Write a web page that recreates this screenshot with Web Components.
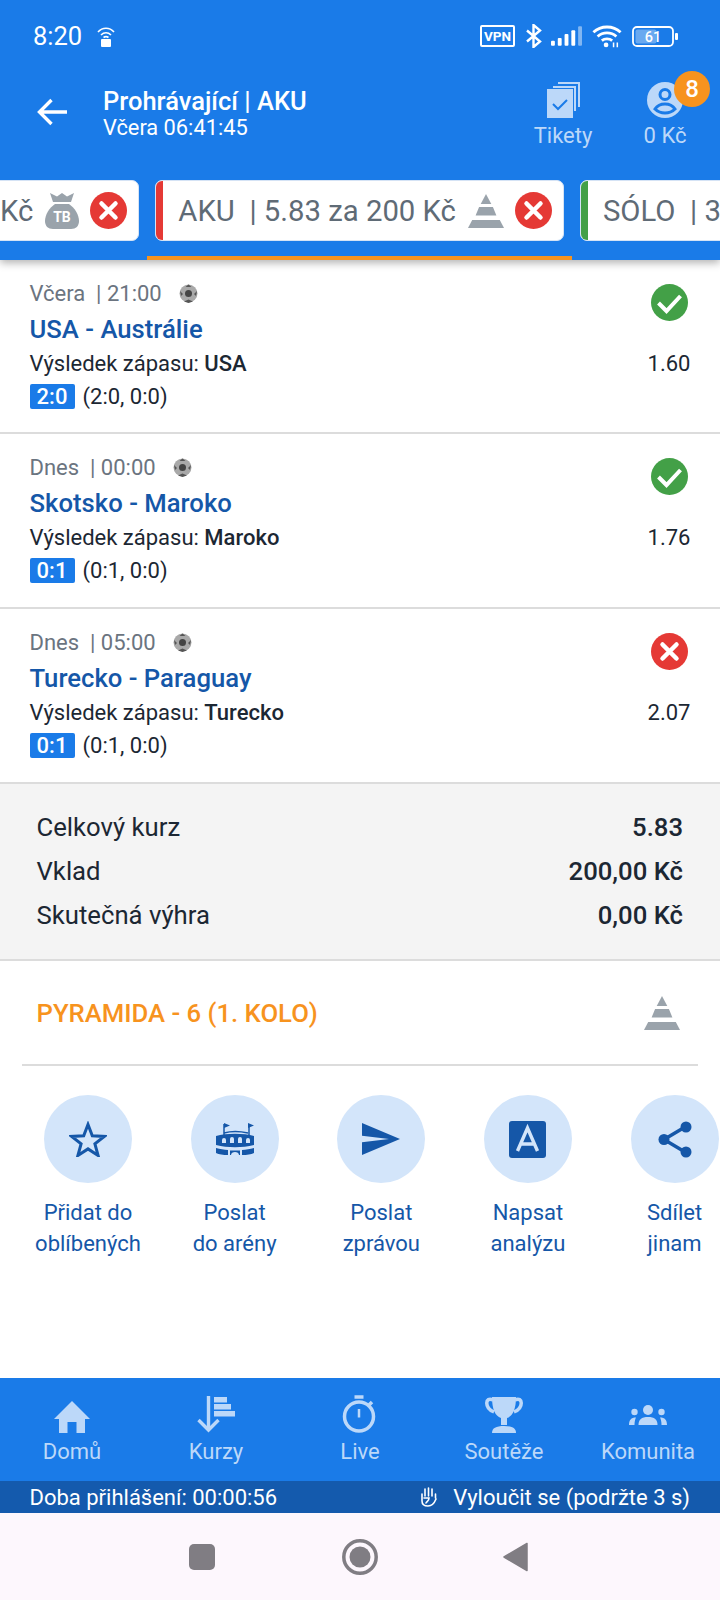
<!DOCTYPE html>
<html lang="cs">
<head>
<meta charset="utf-8">
<title>Tiket</title>
<style>
  html, body { margin: 0; padding: 0; }
  body {
    width: 720px;
    height: 1600px;
    overflow: hidden;
    display: flex;
    flex-direction: column;
    background: #fff;
    font-family: Roboto, "Noto Sans", sans-serif;
    color: #1c2733;
  }
</style>
</head>
<body>
<top-panel>
  <status-bar></status-bar>
  <top-header title="Prohrávající | AKU" subtitle="Včera 06:41:45"></top-header>
  <tab-strip>
    <bet-tab style="margin-left:-31px" icon="bag">Kč</bet-tab>
    <bet-tab active stripe="#e53935" icon="pyramid">AKU&nbsp; | 5.83 za 200 Kč</bet-tab>
    <bet-tab stripe="#43a047">SÓLO&nbsp; | 3</bet-tab>
  </tab-strip>
</top-panel>
<match-row day="Včera" time="21:00" teams="USA - Austrálie" pick="USA" score="2:0" detail="(2:0, 0:0)" odds="1.60" state="won"></match-row>
<match-row day="Dnes" time="00:00" teams="Skotsko - Maroko" pick="Maroko" score="0:1" detail="(0:1, 0:0)" odds="1.76" state="won"></match-row>
<match-row day="Dnes" time="05:00" teams="Turecko - Paraguay" pick="Turecko" score="0:1" detail="(0:1, 0:0)" odds="2.07" state="lost"></match-row>
<ticket-summary>
  <summary-line label="Celkový kurz" value="5.83"></summary-line>
  <summary-line label="Vklad" value="200,00 Kč"></summary-line>
  <summary-line label="Skutečná výhra" value="0,00 Kč"></summary-line>
</ticket-summary>
<ticket-type>PYRAMIDA - 6 (1. KOLO)</ticket-type>
<action-row>
  <action-button icon="star">Přidat do<br>oblíbených</action-button>
  <action-button icon="arena">Poslat<br>do arény</action-button>
  <action-button icon="send">Poslat<br>zprávou</action-button>
  <action-button icon="write">Napsat<br>analýzu</action-button>
  <action-button icon="share">Sdílet<br>jinam</action-button>
</action-row>
<bottom-nav>
  <nav-item icon="home">Domů</nav-item>
  <nav-item icon="odds">Kurzy</nav-item>
  <nav-item icon="live">Live</nav-item>
  <nav-item icon="cup">Soutěže</nav-item>
  <nav-item icon="people">Komunita</nav-item>
</bottom-nav>
<session-bar time="00:00:56"></session-bar>
<system-nav></system-nav>

<script>
const BLUE = "#1a7be8";
const NAVY = "#1557a8";
const PALE = "#bcd8f9";
const GREY = "#9aa3ab";

const PYRAMID = `<svg width="36" height="34" viewBox="0 0 36 34" fill="${GREY}">
  <path d="M18 0l5.300 10h-10.600z"/><path d="M11.100 13h13.800l3.500 8.600h-20.800z"/><path d="M4.200 26h27.600l4.200 8h-36z"/></svg>`;

const TAB_ICONS = {
    pyramid: PYRAMID,
    bag: `<svg width="34" height="36" viewBox="0 0 34 36" fill="${GREY}">
      <path d="M5 0l7 3.500 5-3.500 5 3.500 7-3.500-3 9h-18z"/>
      <path d="M10 11h14c6 4 10 11 10 17 0 5-3 8-8 8h-18c-5 0-8-3-8-8 0-6 4-13 10-17z"/>
      <text x="17" y="29" text-anchor="middle" font-family="Roboto" font-weight="700" font-size="14" fill="#fff">TB</text></svg>`
};

const ACTION_ICONS = {
    star: `<svg width="38" height="36" viewBox="0 0 38 36" fill="none" stroke="${NAVY}" stroke-width="3"><path d="M19 3.500l4.300 11.300 12 .6-9.400 7.500 3.200 11.600-10.100-6.600-10.100 6.600 3.200-11.600-9.400-7.500 12-.6z"/></svg>`,
    arena: `<svg width="38" height="34" viewBox="0 0 38 34" fill="${NAVY}">
      <path d="M8 2v14M33 2v14" stroke="${NAVY}" stroke-width="1.500"/>
      <path d="M8 1l6 2.500-6 2.500zM32 1l6 2.500-6 2.500z"/>
      <path d="M8 11c7-2 15-2 24 0" fill="none" stroke="${NAVY}" stroke-width="1.500"/>
      <path fill-rule="evenodd" d="M0 14c10-3 28-3 38 0v9c-12 3-26 3-38 0zM6 21h4v-3a2 2 0 0 0-4 0zM14 21h4v-4a2 2 0 0 0-4 0zM22 21h4v-4a2 2 0 0 0-4 0zM30 21h4v-3a2 2 0 0 0-4 0z"/>
      <path d="M0 26c4 1.200 8 1.800 12 2v5c-5 0-9-.6-12-2zM38 26c-4 1.200-8 1.800-12 2v5c5 0 9-.6 12-2zM14 28.500h10v4.500h-1c0-4-8-4-8 0h-1z"/></svg>`,
    send: `<svg width="38" height="32" viewBox="0 0 38 32" fill="${NAVY}"><path d="M0 0l38 16-38 16v-12.800l27-3.200-27-3.200z"/></svg>`,
    write: `<svg width="37" height="37" viewBox="0 0 37 37"><rect width="37" height="37" rx="3" fill="${NAVY}"/><path d="M8.500 30l10-23 10 23M12 23h13" fill="none" stroke="#d3e5fa" stroke-width="3.400"/></svg>`,
    share: `<svg width="34" height="37" viewBox="0 0 34 37" fill="${NAVY}"><path d="M27 6l-21 12.500 21 12.500" fill="none" stroke="${NAVY}" stroke-width="3.500"/><circle cx="28" cy="6" r="5.500"/><circle cx="6" cy="18.500" r="5.500"/><circle cx="28" cy="31" r="5.500"/></svg>`
};

const NAV_ICONS = {
    home: `<svg width="36" height="32" viewBox="0 0 36 32" fill="${PALE}"><path d="M18 0l18 18h-5v14h-8.500v-11h-9v11h-8.500v-14h-5z"/></svg>`,
    odds: `<svg width="38" height="37" viewBox="0 0 38 37" fill="${PALE}"><path d="M11.500 0v33" stroke="${PALE}" stroke-width="3.400"/><path d="M1.500 24l10 10 10-10" fill="none" stroke="${PALE}" stroke-width="3.400"/><rect x="17" y="1" width="13" height="5.500"/><rect x="17" y="8" width="17" height="5.500"/><rect x="17" y="15" width="21" height="5.500"/></svg>`,
    live: `<svg width="36" height="38" viewBox="0 0 36 38" fill="none" stroke="${PALE}" stroke-width="3.500"><circle cx="17" cy="21.500" r="14.500"/><path d="M12.500 2h9M30 7l-3 3"/><path d="M17 14v8.500" stroke-width="2.500"/></svg>`,
    cup: `<svg width="38" height="37" viewBox="0 0 38 37" fill="${PALE}"><path d="M8 4c-8-4-9 8 1 12M30 4c8-4 9 8-1 12" fill="none" stroke="${PALE}" stroke-width="3.500"/><path d="M7 1h24c0 12-3 19-9 21v7h-6v-7c-6-2-9-9-9-21z"/><path d="M7 37c0-5 4-7 12-7s12 2 12 7z"/></svg>`,
    people: `<svg width="38" height="20" viewBox="0 0 38 20" fill="${PALE}" style="margin-bottom:8px"><circle cx="19" cy="5" r="5"/><circle cx="5.500" cy="7" r="3.200"/><circle cx="32.500" cy="7" r="3.200"/><path d="M9.500 20c0-5.500 3-8 9.500-8s9.500 2.500 9.500 8z"/><path d="M0 20c0-5 2-7.500 7-7.500-1 2-1.500 4.500-1.500 7.500zM38 20c0-5-2-7.500-7-7.500 1 2 1.500 4.500 1.500 7.500z"/></svg>`
};

function closeIcon(size) {
    return `<svg width="${size}" height="${size}" viewBox="0 0 37 37"><circle cx="18.500" cy="18.500" r="18.500" fill="#e53935"/><path d="M11.500 11.500l14 14M25.500 11.500l-14 14" stroke="#fff" stroke-width="4.500" stroke-linecap="round"/></svg>`;
}

class BaseElement extends HTMLElement {
    constructor() {
        super();
        this.attachShadow({ mode: "open" });
    }
    connectedCallback() {
        this.shadowRoot.innerHTML = this.render();
    }
    attr(name) {
        const value = this.getAttribute(name);
        return value !== null ? value : "";
    }
}

class TopPanel extends BaseElement {
    render() {
        return `<style>
          :host { display: block; position: relative; z-index: 2; flex: none; height: 260px; background: ${BLUE}; box-shadow: 0 3px 8px rgba(0,0,0,.3); }
        </style><slot></slot>`;
    }
}

class StatusBar extends BaseElement {
    render() {
        return `<style>
          :host { display: flex; align-items: center; height: 72px; padding: 0 42px 0 33px; color: #fff; font-size: 25.500px; }
          .left { display: flex; align-items: center; gap: 15px; flex: 1; }
          .right { display: flex; align-items: center; }
          svg { display: block; }
        </style>
        <div class="left"><span>8:20</span>
          <svg width="18" height="21" viewBox="0 0 18 21" fill="none" stroke="#fff" stroke-width="1.600"><path d="M1 6c4.500-5 11.500-5 16 0M4 9c3-3 7-3 10 0M6.500 11.500c1.500-1 3.500-1 5 0"/><rect x="4" y="13" width="10" height="8" rx="1" fill="#fff" stroke="none"/></svg></div>
        <div class="right">
          <svg width="35" height="22" viewBox="0 0 35 22" style="margin-right:10px"><rect x="1" y="1" width="33" height="20" rx="1" fill="none" stroke="#fff" stroke-width="2"/><text x="17.500" y="16" text-anchor="middle" font-family="Roboto" font-weight="700" font-size="13.500" fill="#fff">VPN</text></svg>
          <svg width="17" height="24" viewBox="0 0 17 24" fill="none" stroke="#fff" stroke-width="2.400" style="margin-right:9px"><path d="M2 6.500l13 11-6.500 5.500v-22l6.500 5.500-13 11"/></svg>
          <svg width="31" height="21" viewBox="0 0 32 21" fill="#fff" style="margin-right:10px"><rect x="0" y="15" width="4" height="5" rx="1"/><rect x="7" y="12" width="4" height="8" rx="1"/><rect x="14" y="8" width="4" height="12" rx="1"/><rect x="21" y="4" width="4" height="16" rx="1"/><rect x="28" y="0" width="4" height="20" rx="1" opacity=".45"/></svg>
          <svg width="30" height="24" viewBox="0 0 32 24" fill="none" stroke="#fff" stroke-width="3" style="margin-right:10px"><path d="M1.500 8c8-7.500 21-7.500 29 0M6 12.500c5.500-5 14.500-5 20 0M10.500 17c3-2.500 8-2.500 11 0"/><circle cx="15" cy="21.500" r="2.500" fill="#fff" stroke="none"/><path d="M23 19v5M27 19v5" stroke-width="1.600"/></svg>
          <svg width="46" height="21" viewBox="0 0 46 21"><rect x="1" y="1" width="40" height="19" rx="4" fill="none" stroke="#fff" stroke-width="1.800"/><rect x="3.500" y="3.500" width="21" height="14" rx="2" fill="#fff" opacity=".35"/><rect x="43" y="7" width="3" height="7" rx="1" fill="#fff"/><text x="21" y="16" text-anchor="middle" font-family="Roboto" font-weight="500" font-size="14.500" fill="#fff">61</text></svg>
        </div>`;
    }
}

class TopHeader extends BaseElement {
    render() {
        return `<style>
          :host { display: flex; align-items: flex-start; height: 108px; color: #fff; }
          .back { flex: none; width: 30px; margin: 26px 36px 0 37px; display: block; }
          .titles { flex: 1; padding-top: 15px; }
          .title { font-size: 25.500px; font-weight: 500; line-height: 28px; }
          .sub { margin-top: -1px; font-size: 21.800px; line-height: 28px; }
          .tool { flex: none; width: 102px; padding-top: 10px; display: flex; flex-direction: column; align-items: center; color: ${PALE}; font-size: 22px; line-height: 28px; }
          .tool svg { display: block; }
          .me { margin-right: 4px; }
          .icon { position: relative; height: 36px; margin-bottom: 4px; }
          .badge { position: absolute; left: 27px; top: -11px; width: 36px; height: 36px; border-radius: 50%; background: #f7931e; color: #fff; font-size: 24px; font-weight: 500; line-height: 36px; text-align: center; }
        </style>
        <svg class="back" height="28" viewBox="0 0 30 28" fill="none" stroke="#fff" stroke-width="3.400"><path d="M30 14h-27M14.500 2l-12 12 12 12"/></svg>
        <div class="titles"><div class="title">${this.attr("title")}</div><div class="sub">${this.attr("subtitle")}</div></div>
        <div class="tool"><div class="icon"><svg width="33" height="36" viewBox="0 0 33 36" fill="none"><path d="M11 1h21v24M6 5h22v24" stroke="${PALE}" stroke-width="2"/><rect y="7" width="26" height="29" fill="${PALE}"/><path d="M6 22l5 5 9-9" stroke="${BLUE}" stroke-width="2"/></svg></div>Tikety</div>
        <div class="tool me"><div class="icon"><svg width="36" height="36" viewBox="0 0 36 36"><circle cx="18" cy="18" r="18" fill="${PALE}"/><circle cx="18" cy="12.500" r="5" fill="none" stroke="${BLUE}" stroke-width="3"/><path d="M8 27c2-3 6-5 10-5s8 2 10 5c-2.500 2.500-6 4-10 4s-7.500-1.500-10-4z" fill="${PALE}" stroke="${BLUE}" stroke-width="3"/></svg><span class="badge">8</span></div>0 Kč</div>`;
    }
}

class TabStrip extends BaseElement {
    render() {
        return `<style>
          :host { display: flex; height: 80px; overflow: hidden; }
        </style><slot></slot>`;
    }
}

class BetTab extends BaseElement {
    render() {
        const icon = TAB_ICONS[this.attr("icon")] || "";
        const close = this.attr("icon") ? closeIcon(37) : "";
        return `<style>
          :host { display: block; flex: none; padding: 0 8px; height: 80px; box-sizing: border-box; border-bottom: 4px solid ${this.hasAttribute("active") ? "#f7931e" : "transparent"}; }
          .tab { display: flex; align-items: center; gap: 11px; height: 61px; box-sizing: border-box; background: #fff; border-radius: 7px; border: 1px solid #d5e3f5; overflow: hidden; padding-right: 11px; color: #5f6b76; font-size: 29.300px; white-space: nowrap; }
          .stripe { flex: none; align-self: stretch; width: 7px; background: ${this.attr("stripe") || "#fff"}; }
          .text { margin-left: auto; padding: 0 1px 0 4px; }
          svg { display: block; flex: none; }
        </style>
        <div class="tab"><span class="stripe"></span><span class="text"><slot></slot></span>${icon}${close}</div>`;
    }
}

class MatchRow extends BaseElement {
    render() {
        const won = this.attr("state") === "won";
        const mark = won
            ? `<svg width="37" height="37" viewBox="0 0 37 37"><circle cx="18.500" cy="18.500" r="18.500" fill="#43a047"/><path d="M7.500 19l8 8 14-15" fill="none" stroke="#fff" stroke-width="4"/></svg>`
            : closeIcon(37);
        return `<style>
          :host { display: flex; flex: none; height: 175px; box-sizing: border-box; border-bottom: 2px solid #dcdcdc; padding: 20px 30px 0 29.500px; background: #fff; }
          :host(:first-of-type) { height: 174px; }
          .main { flex: 1; }
          .when { display: flex; align-items: center; height: 26px; color: #6b7480; font-size: 22px; }
          .ball { margin-left: 17px; display: block; }
          .teams { margin-top: 8px; font-size: 25.700px; font-weight: 500; line-height: 30px; color: ${NAVY}; }
          .pick { margin-top: 5px; font-size: 22px; line-height: 30px; color: #1c2733; }
          .pick b { font-weight: 500; }
          .score { display: flex; align-items: center; margin-top: 4px; font-size: 22px; color: #1c2733; height: 26px; }
          .chip { width: 45px; height: 25px; line-height: 25px; margin-right: 8px; border-radius: 2px; background: ${BLUE}; color: #fff; font-weight: 500; text-align: center; }
          .side { display: flex; flex-direction: column; align-items: center; width: 42px; }
          .side svg { display: block; margin-top: 4px; }
          .odds { margin-top: 27.500px; font-size: 22px; line-height: 30px; color: #1c2733; }
        </style>
        <div class="main">
          <div class="when">${this.attr("day")}&nbsp; | ${this.attr("time")}
            <svg class="ball" width="19" height="19" viewBox="0 0 19 19"><circle cx="9.500" cy="9.500" r="9" fill="#a9a9a9"/><circle cx="9.500" cy="9.500" r="3.500" fill="#444"/><path d="M9.500 .5l-3 2.500h6zM1 7l1 5 2-2zM18 7l-1 5-2-2zM5 17.500l4.500-2 4.500 2-4.500 1.500z" fill="#555"/></svg></div>
          <div class="teams">${this.attr("teams")}</div>
          <div class="pick">Výsledek zápasu: <b>${this.attr("pick")}</b></div>
          <div class="score"><span class="chip">${this.attr("score")}</span>${this.attr("detail")}</div>
        </div>
        <div class="side">${mark}<div class="odds">${this.attr("odds")}</div></div>`;
    }
}

class TicketSummary extends BaseElement {
    render() {
        return `<style>
          :host { display: flex; flex-direction: column; justify-content: center; flex: none; height: 177px; box-sizing: border-box; padding: 0 37px 2px 36.500px; background: #f4f4f4; border-bottom: 2px solid #dcdcdc; }
        </style><slot></slot>`;
    }
}

class SummaryLine extends BaseElement {
    render() {
        return `<style>
          :host { display: flex; justify-content: space-between; height: 44px; line-height: 44px; font-size: 25.700px; color: #1c2733; }
          b { font-weight: 500; }
        </style><span>${this.attr("label")}</span><b>${this.attr("value")}</b>`;
    }
}

class TicketType extends BaseElement {
    render() {
        return `<style>
          :host { display: flex; align-items: center; justify-content: space-between; flex: none; height: 105px; box-sizing: border-box; margin: 0 22px; padding: 0 18px 0 14.500px; border-bottom: 2px solid #dcdcdc; color: #f7931e; font-size: 25.700px; font-weight: 500; }
          span { padding-top: 1px; }
          svg { display: block; }
        </style><span><slot></slot></span>${PYRAMID}`;
    }
}

class ActionRow extends BaseElement {
    render() {
        return `<style>
          :host { display: flex; flex: 1; padding: 29px 0 0 14.670px; overflow: hidden; }
        </style><slot></slot>`;
    }
}

class ActionButton extends BaseElement {
    render() {
        return `<style>
          :host { display: flex; flex-direction: column; align-items: center; flex: 0 0 146.670px; color: ${NAVY}; font-size: 22px; line-height: 31px; text-align: center; }
          .disc { display: flex; align-items: center; justify-content: center; width: 88px; height: 88px; margin-bottom: 14px; border-radius: 50%; background: #d3e5fa; }
          svg { display: block; }
        </style><div class="disc">${ACTION_ICONS[this.attr("icon")]}</div><div><slot></slot></div>`;
    }
}

class BottomNav extends BaseElement {
    render() {
        return `<style>
          :host { display: flex; flex: none; height: 103px; background: ${BLUE}; }
        </style><slot></slot>`;
    }
}

class NavItem extends BaseElement {
    render() {
        return `<style>
          :host { display: flex; flex-direction: column; align-items: center; flex: 1; color: ${PALE}; font-size: 22px; }
          .icon { display: flex; align-items: flex-end; justify-content: center; height: 40px; margin: 15px 0 4px; }
          .label { line-height: 30px; }
          svg { display: block; }
        </style><div class="icon">${NAV_ICONS[this.attr("icon")]}</div><div class="label"><slot></slot></div>`;
    }
}

class SessionBar extends BaseElement {
    render() {
        return `<style>
          :host { display: flex; align-items: center; justify-content: space-between; flex: none; height: 32px; padding: 0 30px 0 29.500px; background: #145aad; color: #fff; font-size: 22px; }
          .quit { display: flex; align-items: center; gap: 16px; }
          svg { display: block; }
        </style>
        <span>Doba přihlášení: ${this.attr("time")}</span>
        <span class="quit"><svg width="17" height="20" viewBox="0 0 17 20" fill="none" stroke="#fff" stroke-width="1.600" stroke-linecap="round"><path d="M2 7v7c0 3 2 5 6 5 4 0 6-2 8-7M5 9v-7M8.500 9v-8M12 9v-7M15.500 11v-4M4 11h5c0 3-2 3-3 5"/></svg>Vyloučit se (podržte 3 s)</span>`;
    }
}

class SystemNav extends BaseElement {
    render() {
        return `<style>
          :host { display: flex; align-items: center; justify-content: center; flex: none; height: 87px; padding-right: 4px; background: #fdf7fd; }
          .square { width: 26px; height: 26px; border-radius: 5px; background: #807d83; margin-right: 127px; }
          svg { display: block; }
        </style>
        <div class="square"></div>
        <svg width="36" height="36" viewBox="0 0 36 36" style="margin-right:125px"><circle cx="18" cy="18" r="16.200" fill="none" stroke="#807d83" stroke-width="3.500"/><circle cx="18" cy="18" r="10.500" fill="#807d83"/></svg>
        <svg width="25" height="30" viewBox="0 0 25 30"><path d="M24 1.500v27l-23-13.500z" fill="#807d83" stroke="#807d83" stroke-linejoin="round" stroke-width="1.500"/></svg>`;
    }
}

customElements.define("top-panel", TopPanel);
customElements.define("status-bar", StatusBar);
customElements.define("top-header", TopHeader);
customElements.define("tab-strip", TabStrip);
customElements.define("bet-tab", BetTab);
customElements.define("match-row", MatchRow);
customElements.define("ticket-summary", TicketSummary);
customElements.define("summary-line", SummaryLine);
customElements.define("ticket-type", TicketType);
customElements.define("action-row", ActionRow);
customElements.define("action-button", ActionButton);
customElements.define("bottom-nav", BottomNav);
customElements.define("nav-item", NavItem);
customElements.define("session-bar", SessionBar);
customElements.define("system-nav", SystemNav);
</script>
</body>
</html>
